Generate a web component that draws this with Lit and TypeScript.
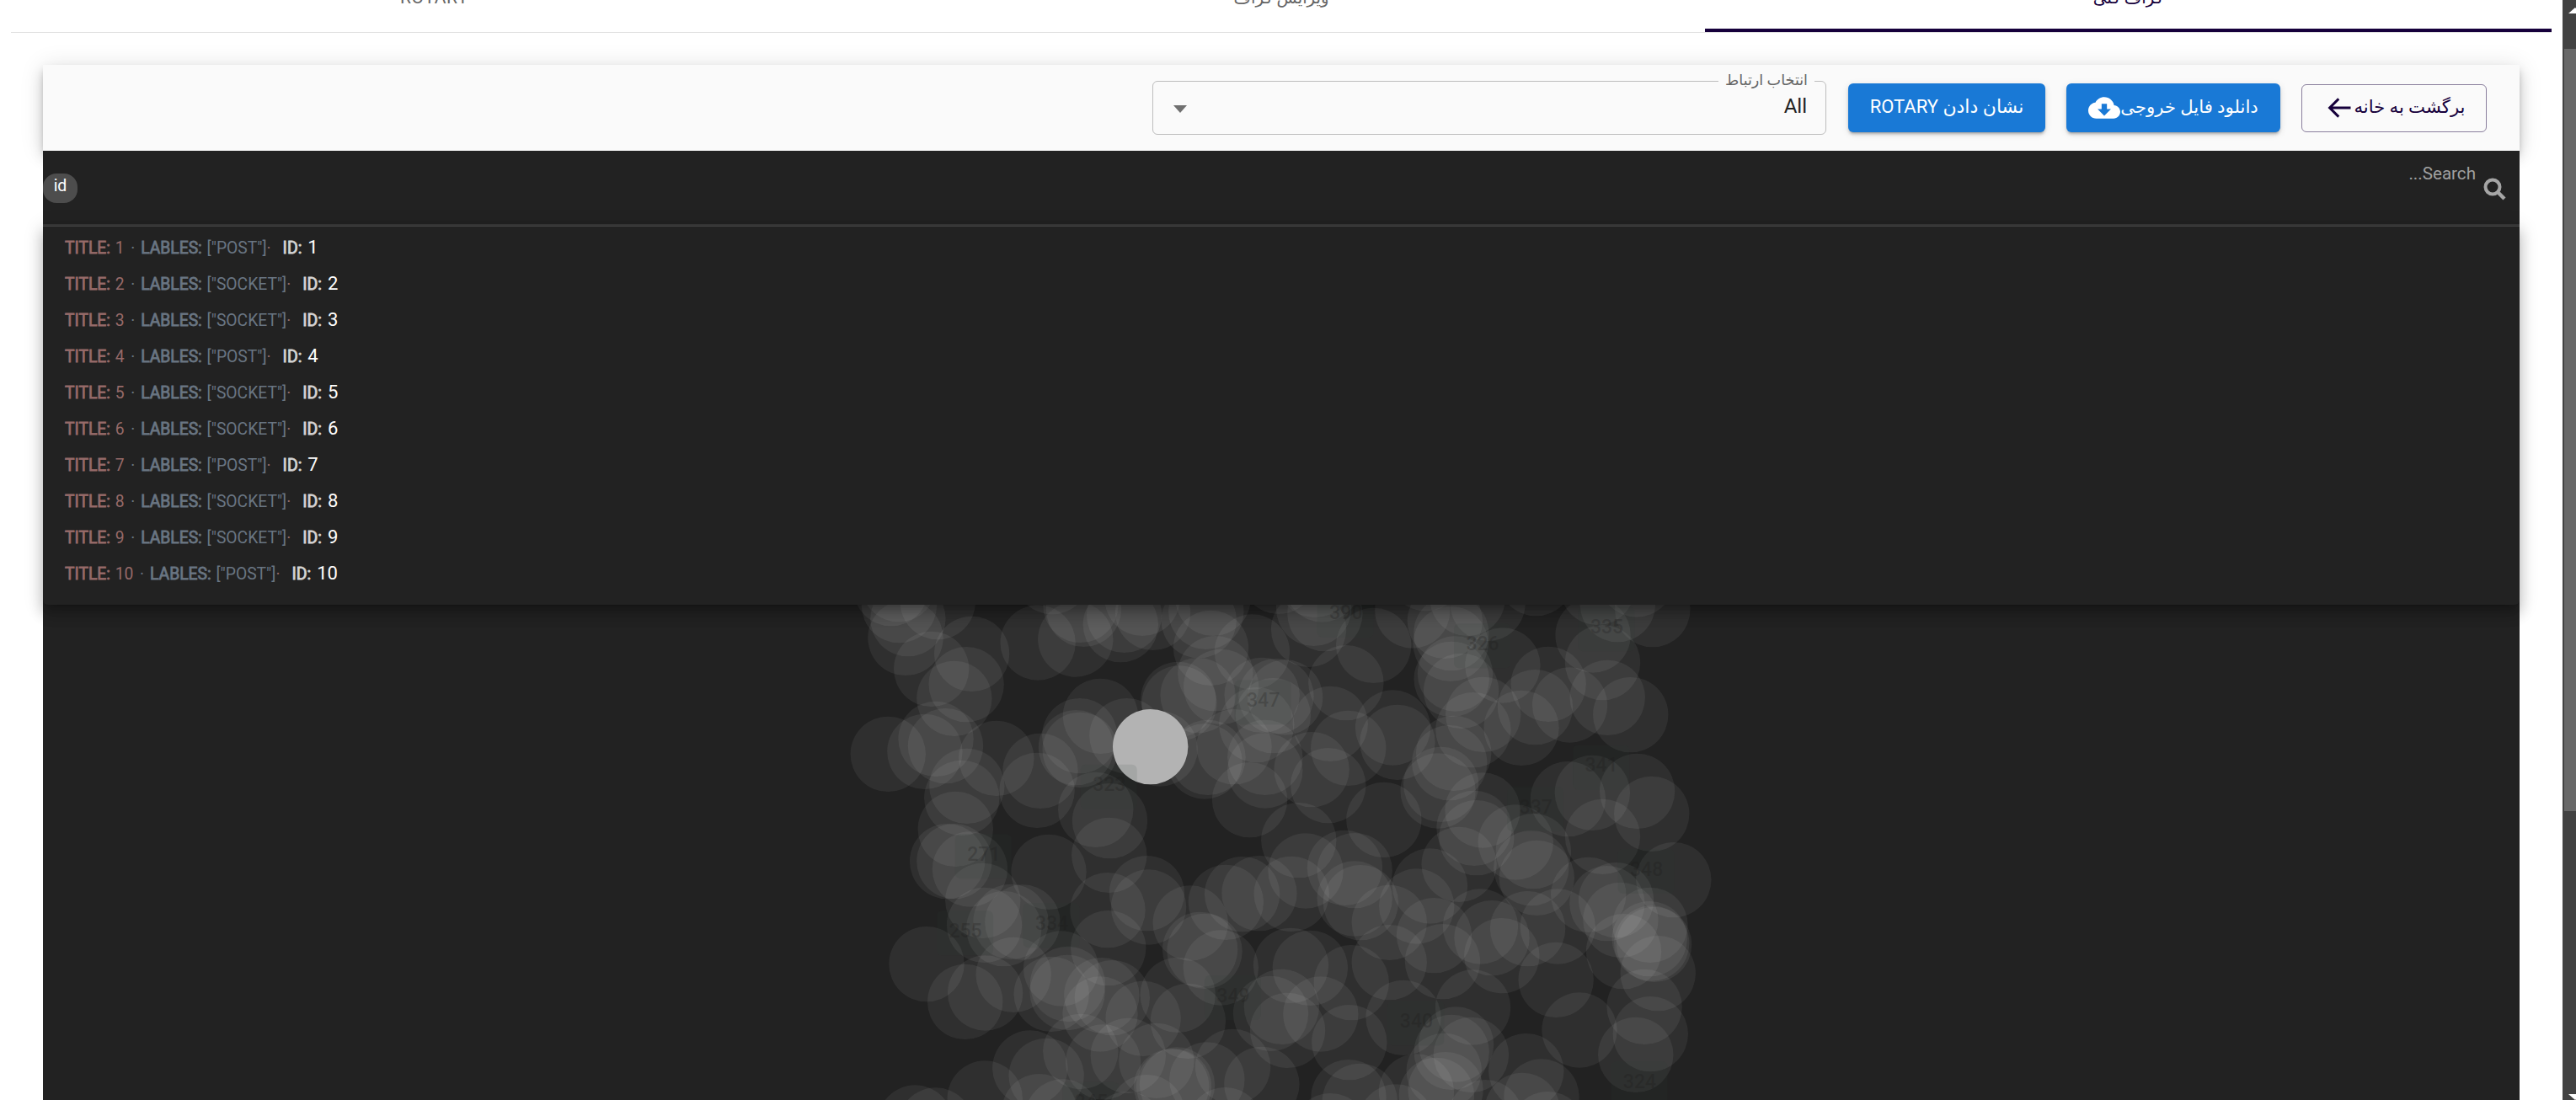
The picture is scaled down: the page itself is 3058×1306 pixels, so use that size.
import { LitElement, html, svg, css } from "lit";
import { customElement } from "lit/decorators.js";

type Point = [number, number];
interface Region {
  x: number;
  y: number;
  nodes: Point[];
  labels: [string, number, number][];
}

// Node positions are kept on a finer grid than the canvas, one region at a time.
const GRID_X = 2.8;
const GRID_Y = 3;
const NODE_RADIUS = 44.7;

const REGIONS: Region[] = [
  {
    x: 990,
    y: 700,
    nodes: [
      [238, 172], [246, 104], [217, 56], [190, -4], [215, -19], [345, 44], [458, 229], [324, 283], [440, 338],
      [400, 388], [678, 189], [803, 177], [830, 70], [953, 125], [965, 91], [820, 55], [725, -46], [1025, 31],
      [1060, 82], [1213, 110], [1253, 208], [1237, 79], [1260, 31], [1268, 299], [1287, 346], [1145, 391],
      [1148, 405], [1210, 377], [1390, 222], [1423, 376], [1470, 380], [1500, 384], [1460, 449], [1405, 482],
      [1433, 598], [1330, 560], [1243, 598], [1232, 612], [886, 451], [974, 521], [817, 521], [805, 563],
      [818, 571], [1084, 567], [180, 586], [302, 577], [339, 532], [371, 557], [540, 601], [686, 646],
      [675, 715], [442, 700], [425, 742], [404, 853], [870, 784], [917, 824], [915, 946], [1382, 749],
      [1433, 645], [1545, 893],
    ],
    labels: [["347", 1427, 391], ["323", 915, 692]],
  },
  {
    x: 1500,
    y: 700,
    nodes: [
      [160, 641], [215, 698], [140, 1002], [167, 67], [204, 86], [195, -18], [170, -35], [150, 142], [50, -47],
      [274, 332], [366, 199], [495, 75], [540, -57], [603, 112], [622, 193], [678, 31], [745, 49], [624, 155],
      [625, 319], [637, 300], [657, 361], [795, 270], [905, -40], [1110, -8], [1095, 162], [1127, 260],
      [1177, 53], [1293, 71], [1240, -36], [947, 337], [1018, 411], [1143, 385], [1220, 446], [903, 419],
      [857, 493], [730, 445], [697, 500], [632, 583], [618, 617], [580, 717], [590, 694], [430, 492],
      [445, 544], [222, 478], [282, 565], [400, 820], [728, 786], [700, 850], [708, 884], [838, 900],
      [897, 932], [1012, 746], [1093, 724], [1242, 718], [1290, 799], [1127, 880], [1363, 1034],
    ],
    labels: [["390", 274, 80], ["326", 728, 190], ["335", 1141, 130], ["341", 1123, 623], ["337", 905, 772]],
  },
  {
    x: 990,
    y: 996,
    nodes: [
      [377, 80], [400, 80], [452, 108], [495, 220], [500, 307], [588, 295], [565, 320], [627, 297], [714, 118],
      [910, 254], [912, 389], [1040, 194], [1046, 243], [1185, 300], [1303, 226], [1357, 197], [1414, 194],
      [1521, 196], [1217, 394], [1232, 400], [1286, 459], [1143, 556], [1177, 649], [308, 446], [436, 580],
      [503, 549], [597, 484], [723, 553], [755, 462], [777, 517], [776, 547], [890, 557], [925, 566],
      [885, 624], [1028, 640], [820, 757], [895, 795], [978, 772], [1072, 790], [1122, 882], [1130, 882],
      [1141, 876], [1240, 858], [1326, 811], [1422, 874], [1508, 682], [1452, 622], [1488, 598], [1519, 451],
      [1583, 460], [1618, 624], [652, 816], [706, 844], [502, 924], [270, 1011], [338, 1020], [683, 971],
      [760, 990], [1040, 974], [975, 1034], [1300, 1019],
    ],
    labels: [["271", 498, 52], ["255", 437, 325], ["334", 724, 298], ["349", 1327, 555], ["345", 855, 935]],
  },
  {
    x: 1500,
    y: 996,
    nodes: [
      [270, 103], [303, 113], [303, 213], [323, 227], [418, 298], [553, 168], [509, 240], [650, 91], [567, 344],
      [418, 440], [595, 437], [721, 312], [759, 353], [878, 320], [792, 416], [978, 312], [908, 139],
      [890, 104], [972, 502], [1080, 199], [1142, 230], [1172, 218], [1187, 289], [1285, 307], [1283, 356],
      [1290, 372], [1298, 376], [1197, 401], [1311, 479], [1266, 598], [1286, 695], [1237, 769], [1050, 681],
      [696, 600], [292, 512], [285, 725], [465, 637], [640, 732], [625, 760], [690, 769], [600, 826],
      [605, 893], [575, 913], [508, 900], [873, 827], [924, 918], [860, 967], [945, 1034], [737, 992],
      [283, 920], [320, 934], [222, 1040], [440, 1008],
    ],
    labels: [["348", 1273, 105], ["340", 508, 646], ["324", 1250, 862]],
  },
];

const ROWS = ["POST", "SOCKET", "SOCKET", "POST", "SOCKET", "SOCKET", "POST", "SOCKET", "SOCKET", "POST"].map(
  (label, i) => ({ id: i + 1, label })
);

@customElement("graph-canvas")
class GraphCanvas extends LitElement {
  static styles = css`
    :host { display: block; flex: 1; min-height: 0; overflow: hidden; background: #222; }
    svg { display: block; }
    .node { fill: #fff; fill-opacity: 0.063; }
    .active { fill: #b3b3b3; }
    .tag { fill: #294438; fill-opacity: 0.11; }
    .tag-text { font: 500 23px Roboto, sans-serif; fill: #1c1a1a; fill-opacity: 0.27; text-anchor: middle; }
  `;
  render() {
    return html`<svg width="2940" height="588" viewBox="51 718 2940 588">
      ${REGIONS.map((r) =>
        r.nodes.map(
          ([x, y]) =>
            svg`<circle class="node" cx=${r.x + x / GRID_X} cy=${r.y + y / GRID_Y} r=${NODE_RADIUS}></circle>`
        )
      )}
      <circle class="active" cx="1365.7" cy="886.6" r="44.7"></circle>
      ${REGIONS.map((r) =>
        r.labels.map(([text, lx, ly]) => {
          const x = r.x + lx / GRID_X;
          const y = r.y + ly / GRID_Y;
          return svg`<rect class="tag" x=${x - 34} y=${y - 23} width="67" height="53" rx="6"></rect>
            <text class="tag-text" x=${x} y=${y + 8.5}>${text}</text>`;
        })
      )}
    </svg>`;
  }
}

@customElement("app-root")
class AppRoot extends LitElement {
  static styles = css`
    :host { display: flex; width: 3058px; height: 1306px; overflow: hidden; background: #fff;
      font-family: Roboto, "DejaVu Sans", sans-serif; box-sizing: border-box; }
    * { box-sizing: border-box; }
    .page { width: 3042px; height: 1306px; display: flex; flex-direction: column; overflow: hidden; }
    .tabs { direction: rtl; display: grid; grid-template-columns: repeat(3, 1fr); height: 39px; flex: none;
      margin: 0 13px; border-bottom: 1px solid #e0e0e0; }
    .tab { display: flex; justify-content: center; height: 38px; color: #666; font-size: 21px; font-weight: 400;
      letter-spacing: 0.6px; line-height: 26px; white-space: nowrap; }
    .tab span { margin-top: -16px; }
    .tab.fa { font-size: 19.7px; letter-spacing: 0; }
    .tab.fa span { margin-top: -15px; }
    .tab.on { color: #16003b; border-bottom: 4px solid #16003b; }
    .card { margin: 38px 51px 0; display: flex; flex-direction: column; flex: 1; min-height: 0; background: #222; }
    .bar { direction: rtl; display: flex; align-items: center; height: 102px; flex: none; padding-right: 39px;
      background: #fafafa; box-shadow: 0 5px 8px -2px rgba(0,0,0,.2), 0 9px 15px rgba(0,0,0,.14), 0 2px 27px rgba(0,0,0,.12); }
    .btn { display: flex; align-items: center; justify-content: center; height: 58px; margin-left: 25px;
      border-radius: 6px; white-space: nowrap; font-size: 21.2px; flex: none; color: #fff; background: #1979d6;
      box-shadow: 0 4px 2px -3px rgba(0,0,0,.2), 0 3px 3px rgba(0,0,0,.14), 0 2px 8px rgba(0,0,0,.12); }
    .btn.home { width: 220px; height: 57px; background: none; box-shadow: none; color: #16003b;
      border: 1px solid #8a7f9d; padding-left: 1px; }
    .btn.download { width: 254px; }
    .btn.rotary { width: 234px; margin-left: 26px; font-size: 22px; }
    .btn svg { flex: none; }
    .fa-label { margin-top: -4px; }
    .select { direction: rtl; width: 800px; height: 64px; flex: none; margin: 0; padding: 0; border: 1px solid #bdbdbd;
      border-radius: 6px; display: flex; flex-direction: column; align-items: stretch; }
    .legend { margin: -14px 13px 0 0; padding: 0 8px; align-self: flex-start; height: 26px; line-height: 24px;
      background: #fafafa; color: #666; font-size: 17.6px; white-space: nowrap; }
    .value { display: flex; justify-content: space-between; align-items: center; padding: 0 22px 0 24px;
      height: 34px; font-size: 24px; color: #212121; }
    .caret { border: 8px solid transparent; border-top: 9px solid #707070; border-bottom: 0; margin-top: 6px; }
    .search { direction: rtl; display: flex; height: 87px; flex: none; background: #222; padding-right: 16px; }
    .search svg { margin-top: 32px; }
    .placeholder { margin: 14px 9px 0 0; font-size: 20.6px; line-height: 26px; color: #a0a0a0; }
    .chip { margin: 27px auto 0 0; width: 41px; height: 35px; border-radius: 16px; background: #4d4d4d; color: #fff;
      text-align: center; font-size: 19.5px; line-height: 29px; }
    .list { position: relative; z-index: 1; height: 452px; flex: none; padding: 3px 26px 0; background: #222;
      border-radius: 0 0 6px 6px; border-top: 2px solid #333;
      box-shadow: 0 8px 8px -5px rgba(0,0,0,.2), 0 12px 15px 2px rgba(0,0,0,.14), 0 5px 21px 3px rgba(0,0,0,.12); }
    .list::before { content: ""; display: block; height: 1px; background: #444; margin: -3px -26px 3px; }
    .row { display: flex; align-items: baseline; height: 43px; line-height: 43px; font-size: 19.3px; white-space: pre; }
    .title { color: #966a69; }
    .labels { color: #697582; }
    .dot { margin: 0 7px 0 7.5px; }
    .id { color: #fff; font-size: 22px; margin-left: 14px; }
    b { font-weight: 400; -webkit-text-stroke: 0.8px currentColor; margin-right: 1px; }
    .id b { font-size: 19.5px; color: #d4d4d4; margin-right: 2px; }
    .scroll { width: 16px; height: 1306px; background: #424242; padding: 8px 0 0 2px; display: flex;
      flex-direction: column; align-items: stretch; }
    .up, .down { flex: none; border: 8px solid transparent; width: 16px; height: 8px; margin-left: 5px; }
    .up { border-bottom: 7px solid #fff; border-top: 0; }
    .down { border-top: 7px solid #fff; border-bottom: 0; margin-top: 336px; }
    .thumb { flex: none; height: 905px; margin-top: 42px; background: #686868; }
  `;

  render() {
    return html`
      <div class="page">
        <div class="tabs">
          <div class="tab fa on"><span>گراف کلی</span></div>
          <div class="tab fa"><span>ویرایش گراف</span></div>
          <div class="tab"><span>ROTARY</span></div>
        </div>
        <div class="card">
          <div class="bar">
            <div class="btn home">
              <span class="fa-label">برگشت به خانه</span>
              <svg width="36" height="36" viewBox="0 0 24 24" fill="#16003b"><path d="M21 11H6.83l5.36-5.36L10.8 4.2 3 12l7.8 7.8 1.4-1.4L6.83 13H21z"/></svg>
            </div>
            <div class="btn download">
              <span class="fa-label">دانلود فایل خروجی</span>
              <svg width="38" height="38" viewBox="0 0 24 24" fill="#fff"><path d="M19.35 10.04C18.67 6.59 15.64 4 12 4 9.11 4 6.6 5.64 5.35 8.04 2.34 8.36 0 10.91 0 14c0 3.31 2.69 6 6 6h13c2.76 0 5-2.24 5-5 0-2.64-2.05-4.78-4.65-4.96zM17 13l-5 5-5-5h3V9h4v4h3z"/></svg>
            </div>
            <div class="btn rotary"><span class="fa-label">نشان دادن ROTARY</span></div>
            <div class="select">
              <span class="legend">انتخاب ارتباط</span>
              <div class="value"><span>All</span><span class="caret"></span></div>
            </div>
          </div>
          <div class="search">
            <svg width="27" height="27" viewBox="0 0 27 27" fill="none" stroke="#a6a6a6"><circle cx="11" cy="11" r="8.5" stroke-width="4"/><path d="M17 17l8 8" stroke-width="4.5"/></svg>
            <span class="placeholder">Search...</span>
            <span class="chip">id</span>
          </div>
          <div class="list">
            ${ROWS.map(
              (r) => html`<div class="row"><span class="title"><b>TITLE: </b>${r.id}</span><span class="labels"><span class="dot">·</span><b>LABLES: </b>["${r.label}"]</span><span class="title">·</span><span class="id"><b>ID: </b>${r.id}</span></div>`
            )}
          </div>
          <graph-canvas></graph-canvas>
        </div>
      </div>
      <div class="scroll"><i class="up"></i><i class="thumb"></i><i class="down"></i></div>
    `;
  }
}
